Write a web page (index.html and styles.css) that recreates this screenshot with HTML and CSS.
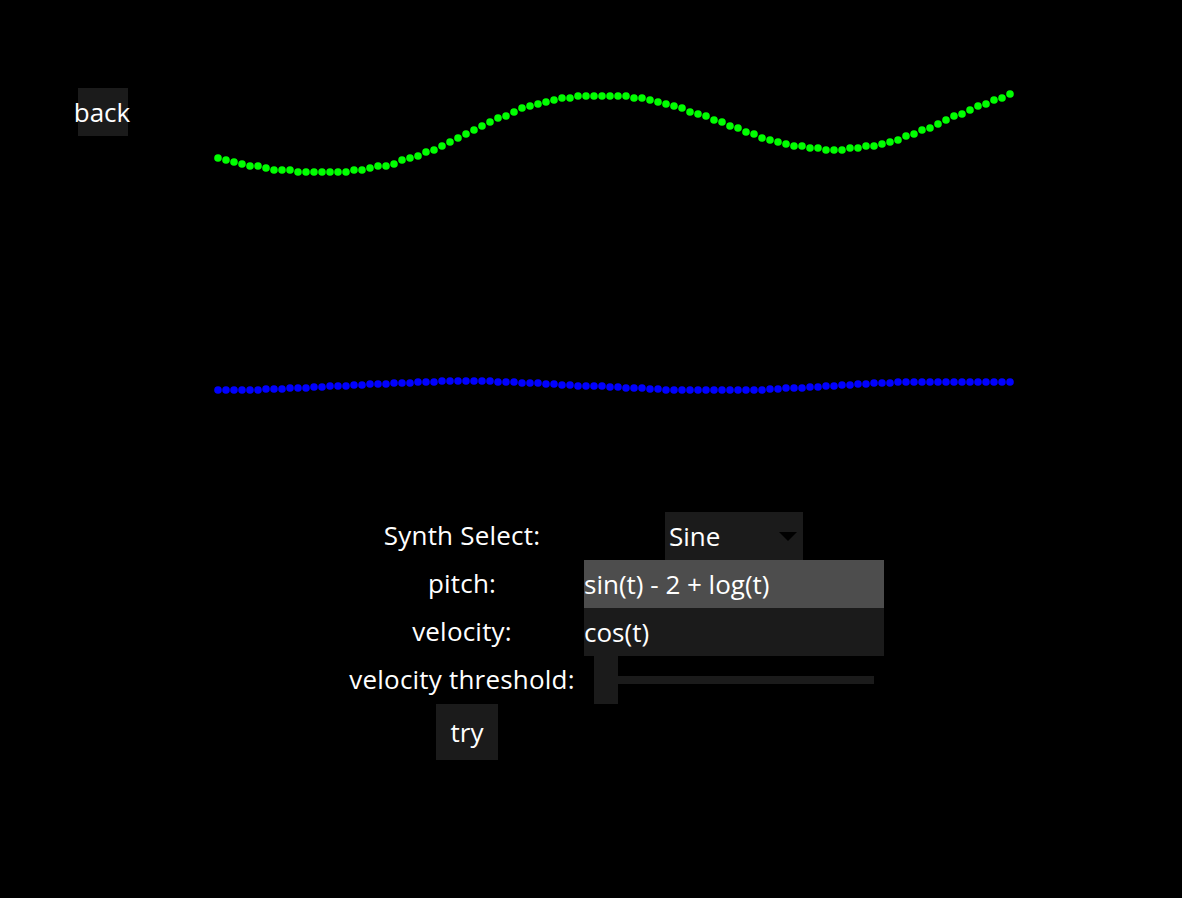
FILE: index.html
```html
<!DOCTYPE html>
<html lang="en">
<head>
  <meta charset="UTF-8">
  <meta name="viewport" content="width=device-width, initial-scale=1.0">
  <title>Synth</title>
  <link rel="stylesheet" href="styles.css">
</head>
<body>
  <div class="top">
    <button class="back">back</button>
    <svg class="plot" width="900" height="320" viewBox="128 80 900 320">
      <defs>
        <marker id="dot-green" markerUnits="userSpaceOnUse" markerWidth="10" markerHeight="10" refX="5" refY="5">
          <circle cx="5" cy="5" r="3.8" fill="#00ff00"/>
        </marker>
        <marker id="dot-blue" markerUnits="userSpaceOnUse" markerWidth="10" markerHeight="10" refX="5" refY="5">
          <circle cx="5" cy="5" r="3.8" fill="#0000ff"/>
        </marker>
      </defs>
      <!-- pitch -->
      <polyline class="wave wave-pitch" points="218,158 226,160 234,162 242,164 250,166 258,166 266,168 274,170 282,170 290,170 298,172 306,172 314,172 322,172 330,172 338,172 346,172 354,170 362,170 370,168 378,166 386,166 394,164 402,160 410,158 418,156 426,152 434,150 442,146 450,142 458,138 466,134 474,130 482,126 490,122 498,118 506,116 514,112 522,108 530,106 538,104 546,102 554,100 562,98 570,98 578,96 586,96 594,96 602,96 610,96 618,96 626,96 634,98 642,98 650,100 658,102 666,104 674,106 682,108 690,112 698,114 706,116 714,120 722,122 730,126 738,128 746,132 754,134 762,138 770,140 778,142 786,144 794,146 802,146 810,148 818,148 826,150 834,150 842,150 850,148 858,148 866,146 874,146 882,144 890,142 898,140 906,136 914,134 922,130 930,128 938,124 946,120 954,116 962,114 970,110 978,106 986,104 994,100 1002,98 1010,94"/>
      <!-- velocity -->
      <polyline class="wave wave-velocity" points="218,390 226,390 234,390 242,390 250,390 258,390 266,389 274,389 282,389 290,388 298,388 306,388 314,387 322,387 330,386 338,386 346,386 354,385 362,385 370,384 378,384 386,384 394,383 402,383 410,383 418,382 426,382 434,382 442,381 450,381 458,381 466,381 474,381 482,381 490,381 498,382 506,382 514,382 522,383 530,383 538,383 546,384 554,384 562,385 570,385 578,386 586,386 594,386 602,386 610,387 618,387 626,388 634,388 642,388 650,389 658,389 666,390 674,390 682,390 690,390 698,390 706,390 714,390 722,390 730,390 738,390 746,390 754,390 762,390 770,389 778,389 786,388 794,388 802,388 810,387 818,387 826,386 834,386 842,385 850,385 858,384 866,384 874,383 882,383 890,383 898,382 906,382 914,382 922,382 930,382 938,382 946,382 954,382 962,382 970,382 978,382 986,382 994,382 1002,382 1010,382"/>
    </svg>
  </div>

  <div class="controls">
    <label class="label" for="synth">Synth Select:</label>
    <span class="select-wrap">
      <select id="synth" class="synth">
        <option>Sine</option>
        <option>Square</option>
        <option>Saw</option>
      </select>
    </span>

    <label class="label" for="pitch">pitch:</label>
    <input type="text" id="pitch" class="field field-active" value="sin(t) - 2 + log(t)">

    <label class="label" for="velocity">velocity:</label>
    <input type="text" id="velocity" class="field" value="cos(t)">

    <label class="label" for="threshold">velocity threshold:</label>
    <input type="range" id="threshold" class="slider" min="0" max="1" step="0.01" value="0">

    <button class="try">try</button>
  </div>
</body>
</html>
```

FILE: styles.css
```css
body {
  margin: 0;
  background: #000;
  color: #fff;
  font-family: "Open Sans", sans-serif;
  font-size: 26px;
}

button,
input,
select {
  font-family: "Open Sans", sans-serif;
  font-size: 26px;
  color: #fff;
}

.top {
  display: flex;
  align-items: flex-start;
  padding-top: 80px;
}

.back {
  display: flex;
  justify-content: center;
  align-items: center;
  width: 50px;
  height: 48px;
  margin: 8px 0 0 78px;
  padding: 0 2px 0 0;
  border: none;
  background: #1b1b1b;
  white-space: nowrap;
}

.plot {
  display: block;
}

.wave {
  fill: none;
  stroke: none;
}

.wave-pitch {
  marker: url(#dot-green);
}

.wave-velocity {
  marker: url(#dot-blue);
}

.controls {
  display: grid;
  grid-template-columns: 228px 308px;
  grid-template-rows: repeat(4, 48px) 56px;
  column-gap: 4px;
  align-items: center;
  justify-items: center;
  margin: 112px 0 0 348px;
}

.label {
  white-space: nowrap;
  letter-spacing: 0.2px;
  margin-top: -3px;
}

.select-wrap {
  position: relative;
  display: block;
}

.select-wrap::after {
  content: "";
  position: absolute;
  right: 6px;
  top: 20px;
  border-left: 9px solid transparent;
  border-right: 9px solid transparent;
  border-top: 9px solid #000;
  pointer-events: none;
}

.synth {
  display: block;
  width: 138px;
  height: 48px;
  padding: 0 0 0 4px;
  border: none;
  border-radius: 0;
  background: #1b1b1b;
  appearance: none;
  -webkit-appearance: none;
}

.field {
  width: 300px;
  height: 48px;
  box-sizing: border-box;
  padding: 0;
  border: none;
  background: #1b1b1b;
  outline: none;
}

.field-active {
  background: #4d4d4d;
}

.slider {
  width: 280px;
  height: 48px;
  margin: 0;
  background: transparent;
  -webkit-appearance: none;
  appearance: none;
}

.slider::-webkit-slider-runnable-track {
  height: 8px;
  background: #1b1b1b;
}

.slider::-webkit-slider-thumb {
  -webkit-appearance: none;
  width: 24px;
  height: 48px;
  margin-top: -20px;
  background: #1b1b1b;
  border: none;
}

.try {
  width: 62px;
  height: 56px;
  margin: 0 0 0 10px;
  padding: 0;
  border: none;
  background: #1b1b1b;
}
```
